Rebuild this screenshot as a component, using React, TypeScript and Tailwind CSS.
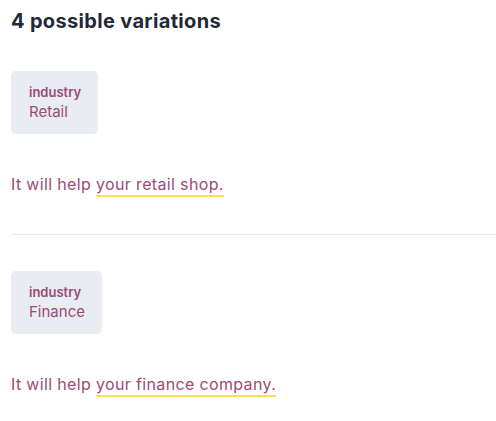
import React from 'react';

const variations = [
  { industry: 'Retail', phrase: 'your retail shop' },
  { industry: 'Finance', phrase: 'your finance company' },
];

const App = () => {
  return (
    <div className="bg-white min-h-screen pl-[11px] font-['Inter','Noto_Sans',sans-serif]">
      <h2 className="pt-[7px] text-[20px] leading-[28px] font-bold tracking-[0.33px] text-[#1f2937]">4 possible variations</h2>
      <div className="mt-[36px]">
        {variations.map((v, index) => (
          <div key={index}>
            {index > 0 && <div className="border-t border-[#e5e7eb] mt-[38px] mb-[36px]" />}
            <div className="inline-flex flex-col bg-[#e9ecf0] rounded-[5px] pl-[18px] pr-[17px] pt-[12px] pb-[11px] text-[#9a4b76]">
              <span className="text-[13px] leading-[18px] font-semibold">industry</span>
              <span className="text-[15px] leading-[22px]">{v.industry}</span>
            </div>
            <p className="mt-[38px] text-[16px] leading-[24px] tracking-[0.35px] text-[#9a4b76]">
              It will help{' '}
              <span className="border-b-2 border-[#fbe14b] pb-[1px]">{v.phrase}.</span>
            </p>
          </div>
        ))}
      </div>
    </div>
  );
};

export default App;
